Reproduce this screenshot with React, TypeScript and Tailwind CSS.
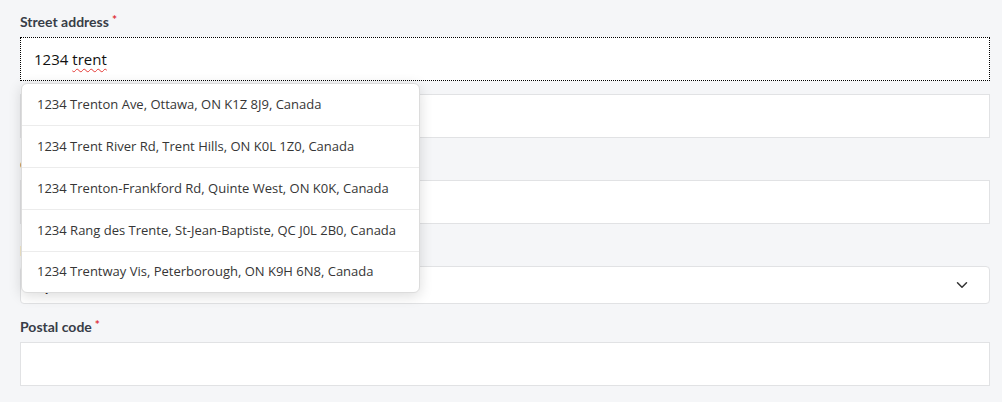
import React from 'react'
import { ChevronDown } from 'lucide-react'

const suggestions = [
  '1234 Trenton Ave, Ottawa, ON K1Z 8J9, Canada',
  '1234 Trent River Rd, Trent Hills, ON K0L 1Z0, Canada',
  '1234 Trenton-Frankford Rd, Quinte West, ON K0K, Canada',
  '1234 Rang des Trente, St-Jean-Baptiste, QC J0L 2B0, Canada',
  '1234 Trentway Vis, Peterborough, ON K9H 6N8, Canada',
]

const Label = ({ text, required }: { text: string; required?: boolean }) => (
  <div className="h-5 mb-[5px] flex items-center text-[14px] font-bold text-[#383d47] font-['Lato',sans-serif] leading-5">
    {text}
    {required && <span className="ml-[3px] text-[#e0313a] text-[12px] -translate-y-[2px]">*</span>}
  </div>
)

const TextBox = () => (
  <div className="h-[44px] bg-white border border-[#e1e2e4]" />
)

const App = () => {
  return (
    <div className="w-[1002px] h-[402px] bg-[#f5f6f8] pl-5 pr-3 pt-3 overflow-hidden font-['Lato',sans-serif]">
      <div className="relative">
        <Label text="Street address" required />
        <div className="h-[44px] bg-white border border-dotted border-black flex items-center pl-[13px] text-[15px] text-[#111] font-['Open_Sans',sans-serif]">
          1234
          <span className="ml-[4px] underline decoration-wavy decoration-[#e53935] decoration-1 underline-offset-[3px]">trent</span>
        </div>

        {/* address suggestions list */}
        <div className="absolute left-px top-[71px] w-[399px] z-10 bg-white border border-[#dcdcdc] rounded-[6px] shadow-[0_3px_14px_rgba(0,0,0,0.14)] overflow-hidden">
          {suggestions.map((s, i) => (
            <div
              key={s}
              className={`flex items-center pl-[15px] text-[13px] text-[#363636] font-['Open_Sans',sans-serif] ${i < suggestions.length - 1 ? 'h-[42px] border-b border-[#ececec]' : 'h-[40px]'}`}
            >
              {s}
            </div>
          ))}
        </div>

        <div className="mt-[13px]">
          <TextBox />
        </div>

        <div className="mt-[17px]">
          <Label text="City" required />
          <TextBox />
        </div>

        <div className="mt-[17px]">
          <Label text="Province" required />
          <div className="h-[38px] bg-white border border-[#e1e2e4] rounded-[4px] flex items-center justify-between pl-[15px] pr-[18px] text-[15px] text-[#222]">
            <span>Quebec</span>
            <ChevronDown size={18} strokeWidth={2} className="text-[#333]" />
          </div>
        </div>

        <div className="mt-[13px]">
          <Label text="Postal code" required />
          <TextBox />
        </div>
      </div>
    </div>
  )
}

export default App
